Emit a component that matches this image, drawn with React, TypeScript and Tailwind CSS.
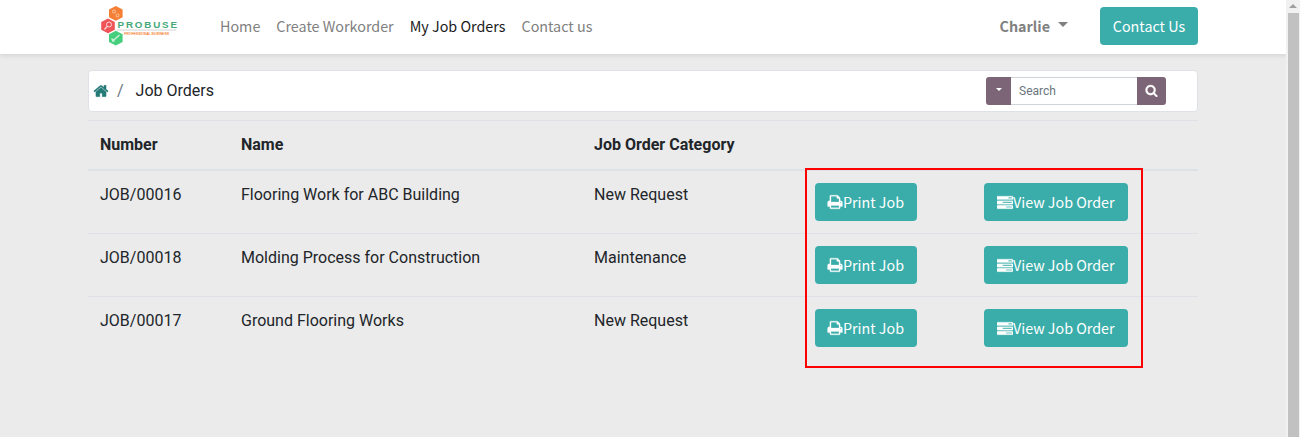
import React from "react";

const PATHS = {
  home: "M1472 992v480q0 26-19 45t-45 19h-384v-384h-256v384h-384q-26 0-45-19t-19-45v-480q0-1 .5-3t.5-3l575-474 575 474q1 2 1 6zm223-69l-62 74q-8 9-21 11h-3q-13 0-21-7l-692-577-692 577q-12 8-24 7-13-2-21-11l-62-74q-8-10-7-23.5t11-21.5l719-599q32-26 76-26t76 26l244 204v-195q0-14 9-23t23-9h192q14 0 23 9t9 23v408l219 182q10 8 11 21.5t-7 23.5z",
  search:
    "M1216 832q0-185-131.5-316.5t-316.5-131.5-316.5 131.5-131.5 316.5 131.5 316.5 316.5 131.5 316.5-131.5 131.5-316.5zm512 832q0 52-38 90t-90 38q-54 0-90-38l-343-342q-179 124-399 124-143 0-273.5-55.5t-225-150-150-225-55.5-273.5 55.5-273.5 150-225 225-150 273.5-55.5 273.5 55.5 225 150 150 225 55.5 273.5q0 220-124 399l343 343q37 37 37 90z",
  print:
    "M448 1536h896v-256h-896v256zm0-640h896v-384h-160q-40 0-68-28t-28-68v-160h-640v640zm1152 64q0-26-19-45t-45-19-45 19-19 45 19 45 45 19 45-19 19-45zm128 0v416q0 13-9.5 22.5t-22.5 9.5h-224v160q0 40-28 68t-68 28h-960q-40 0-68-28t-28-68v-160h-224q-13 0-22.5-9.5t-9.5-22.5v-416q0-79 56.5-135.5t135.5-56.5h64v-544q0-40 28-68t68-28h672q40 0 88 20t76 48l152 152q28 28 48 76t20 88v256h64q79 0 135.5 56.5t56.5 135.5z",
  tasks:
    "M1024 1408h640v-128h-640v128zm-384-512h1024v-128h-1024v128zm640-512h384v-128h-384v128zm512 832v256q0 26-19 45t-45 19h-1664q-26 0-45-19t-19-45v-256q0-26 19-45t45-19h1664q26 0 45 19t19 45zm0-512v256q0 26-19 45t-45 19h-1664q-26 0-45-19t-19-45v-256q0-26 19-45t45-19h1664q26 0 45 19t19 45zm0-512v256q0 26-19 45t-45 19h-1664q-26 0-45-19t-19-45v-256q0-26 19-45t45-19h1664q26 0 45 19t19 45z",
};

function Icon({ name, className }: { name: keyof typeof PATHS; className: string }) {
  return (
    <svg viewBox="0 0 1792 1792" fill="currentColor" stroke="currentColor" strokeWidth="30" className={className} aria-hidden="true">
      <path d={PATHS[name]} />
    </svg>
  );
}

function Logo() {
  return (
    <svg viewBox="0 0 78 42" className="h-[42px] w-[78px] shrink-0 overflow-visible" aria-label="Probuse">
      <path d="M15.800 1l6.800 3.600v7.600l-6.800 3.600-6.800-3.600V4.600z" fill="#f47f35" />
      <path d="M8 13.500l6.800 3.600v7.600L8 28.300l-6.800-3.600v-7.600z" fill="#ef5558" />
      <path d="M15.800 25.700l6.800 3.600v7.600l-6.800 3.600-6.800-3.600v-7.600z" fill="#45cf7c" />
      <g fill="none" stroke="#fff" strokeOpacity=".75">
        <circle cx="14" cy="6.500" r="1.500" strokeOpacity=".5" />
        <circle cx="17.500" cy="10.500" r="1.500" strokeOpacity=".5" />
        <circle cx="9" cy="19.500" r="2.500" />
        <path d="M7 21.500l-2.500 3M12 36.500l7.500-6.500M11.500 33.500l3 3" strokeWidth="1.300" />
      </g>
      <path d="M17 25h59" stroke="#c9c9c9" strokeWidth=".8" />
      <text x="17.500" y="23" textLength="59.500" lengthAdjust="spacing" fontFamily="Liberation Sans, sans-serif" fontWeight="700" fontSize="9.800" fill="#45a878">PROBUSE</text>
      <text x="24" y="30.300" textLength="45" lengthAdjust="spacingAndGlyphs" fontFamily="Liberation Sans, sans-serif" fontSize="4" fill="#f57c28" stroke="#f57c28" strokeWidth=".1">PROFESSIONAL BUSINESS</text>
    </svg>
  );
}

const jobs = [
  { number: "JOB/00016", name: "Flooring Work for ABC Building", category: "New Request" },
  { number: "JOB/00018", name: "Molding Process for Construction", category: "Maintenance" },
  { number: "JOB/00017", name: "Ground Flooring Works", category: "New Request" },
];

function ActionButton({ icon, label, className }: { icon: "print" | "tasks"; label: string; className: string }) {
  return (
    <button className={`flex h-[38px] items-center rounded bg-[#3aadaa] pl-[13px] font-['Noto_Sans_CJK_SC',sans-serif] text-[14.3px] whitespace-nowrap text-white ${className}`}>
      <Icon name={icon} className={icon === "print" ? "-ml-[0.6px] h-4 w-4 shrink-0" : "mt-px h-4 w-4 shrink-0"} />
      <span className={icon === "print" ? "-ml-[0.4px]" : ""}>{label}</span>
    </button>
  );
}

export default function App() {
  return (
    <div className="flex h-[437px] w-[1300px] overflow-hidden bg-[#ebebeb] font-[Roboto,sans-serif] text-base text-[#212529]">
      <div className="flex min-w-0 flex-1 flex-col">
        <header className="flex h-[54px] shrink-0 items-center bg-white pb-[2px] pl-[100px] font-['Noto_Sans_CJK_SC',sans-serif] text-[14.33px] text-[#808080] shadow-[0_2px_4px_rgba(0,0,0,0.09)]">
          <Logo />
          <nav className="ml-[42px] flex gap-4 whitespace-nowrap">
            <a>Home</a>
            <a>Create Workorder</a>
            <a className="text-[#1a1a1a]">My Job Orders</a>
            <a>Contact us</a>
          </nav>
          <div className="mr-8 ml-auto flex items-center gap-2 font-bold">
            Charlie
            <span className="-mt-[2px] border-x-[5px] border-t-[5px] border-x-transparent border-t-[#808080]" />
          </div>
          <button className="mr-[88px] h-[38px] w-[98px] rounded bg-[#3aadaa] text-white">Contact Us</button>
        </header>

        <main className="mx-[88px] mt-4">
          <div className="flex h-[42px] items-center rounded border border-[#dee2e6] bg-white pr-[31px] pl-1">
            <Icon name="home" className="h-4 w-4 text-[#257a77]" />
            <span className="ml-2 text-[#6c757d]">/</span>
            <span className="ml-3">Job Orders</span>
            <div className="ml-auto flex h-7 text-xs">
              <button className="flex w-[25px] items-center justify-center rounded-l-[3px] bg-[#7c6576]">
                <span className="-mt-[3px] border-x-[3.600px] border-t-[3.600px] border-x-transparent border-t-white" />
              </button>
              <div className="flex w-[126px] items-center border-y border-[#ced4da] bg-white pl-2 text-[#6c757d]">Search</div>
              <button className="flex w-[29px] items-center justify-center rounded-r-[3px] bg-[#7c6576] text-white">
                <Icon name="search" className="-mt-px h-[13px] w-[13px]" />
              </button>
            </div>
          </div>

          <div className="relative mt-2">
            <div className="grid h-[51px] grid-cols-[141px_353px_516px] border-t border-b-2 border-[#dee2e6] pt-3 pl-3 leading-6 font-bold">
              <span>Number</span>
              <span>Name</span>
              <span>Job Order Category</span>
            </div>
            {jobs.map((job, i) => (
              <div key={job.number} className={i === 0 ? "grid h-[62px] grid-cols-[141px_353px_221px_169px_144px] pt-3 pl-3 leading-6" : "grid h-[63px] grid-cols-[141px_353px_221px_169px_144px] border-t border-[#dee2e6] pt-3 pl-3 leading-6"}>
                <span>{job.number}</span>
                <span>{job.name}</span>
                <span>{job.category}</span>
                <ActionButton icon="print" label="Print Job" className="w-[102px]" />
                <ActionButton icon="tasks" label="View Job Order" className="w-[144px]" />
              </div>
            ))}
            <div className="pointer-events-none absolute top-12 left-[717px] h-[200px] w-[338px] border-2 border-[#ff0000]" />
          </div>
        </main>
      </div>
      <div className="flex w-[14px] shrink-0 flex-col items-center bg-[#f1f1f1]">
        <span className="mt-1 mb-[5px] border-x-[4px] border-b-[4px] border-x-transparent border-b-[#a0a0a0]" />
        <div className="w-[11px] flex-1 bg-[#c1c1c1]" />
      </div>
    </div>
  );
}
